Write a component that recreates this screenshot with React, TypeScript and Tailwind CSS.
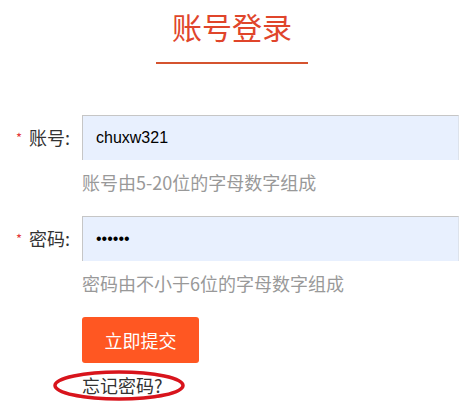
import React from 'react';

const cjk = { fontFamily: '"Noto Sans CJK SC", "Liberation Sans", sans-serif' };

function Field({ label, value, hint, password }: { label: string; value: string; hint: string; password?: boolean }) {
    return (
        <div>
            <div className="flex items-center">
                <div className="flex w-[82px] items-center pl-[16px] text-[18px] text-[#333]">
                    <span className="mr-[7px] text-[13px] text-[#e4393c]">*</span>
                    <span>{label}:</span>
                </div>
                <input
                    readOnly
                    type={password ? 'password' : 'text'}
                    value={value}
                    className="h-[45px] w-[377px] border-t border-l border-r border-t-[#c6c6c6] border-l-[#c6c6c6] border-r-[#dde3ec] bg-[#e8f0fe] px-[13px] text-[16px] text-black outline-none"
                    style={{ fontFamily: '"Liberation Sans", Arial, sans-serif' }}
                />
            </div>
            <div className="mt-[12px] ml-[82px] h-[20px] text-[18px] leading-[20px] text-[#999]">{hint}</div>
        </div>
    );
}

export default function App() {
    return (
        <div className="h-[407px] w-[473px] bg-white" style={cjk}>
            <div className="w-[464px] pt-[9px]">
                <h1 className="text-center text-[30px] leading-[34px] font-normal text-[#e0452b]">账号登录</h1>
                <div className="mx-auto mt-[19px] h-[2px] w-[152px] bg-[#d5532f]" />
            </div>

            <div className="mt-[51px] flex flex-col gap-[24px]">
                <Field label="账号" value="chuxw321" hint="账号由5-20位的字母数字组成" />
                <Field label="密码" value="123456" hint="密码由不小于6位的字母数字组成" password />
            </div>

            <div className="ml-[82px] mt-[24px]">
                <button className="h-[46px] w-[117px] rounded-[3px] bg-[#ff5722] text-[18px] text-white">立即提交</button>
                <div className="relative mt-[12px] w-fit text-[18px] leading-[20px] text-[#333]">
                    忘记密码?
                    <svg className="absolute top-[-5px] left-[-29px] h-[31px] w-[132px]" viewBox="0 0 132 31" fill="none">
                        <ellipse cx="66" cy="15.5" rx="64" ry="13.5" stroke="#d8141c" strokeWidth="3.5" />
                    </svg>
                </div>
            </div>
        </div>
    );
}
